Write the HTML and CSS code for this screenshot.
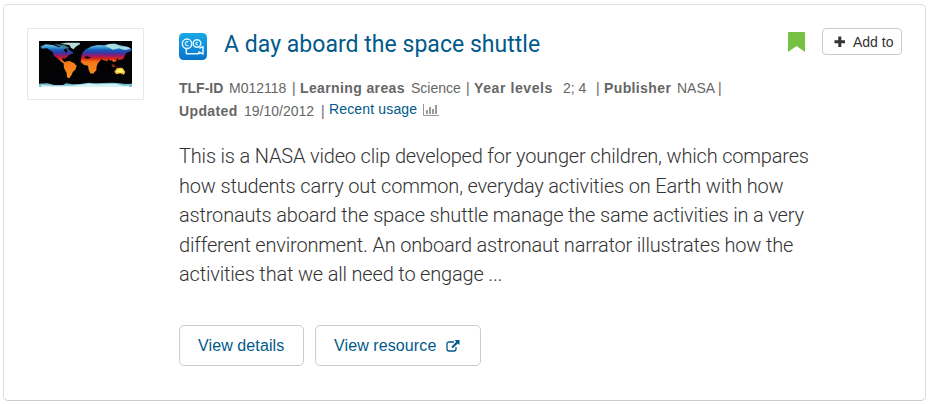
FILE: index.html
```html
<!DOCTYPE html>
<html lang="en">
<head>
<meta charset="utf-8">
<title>A day aboard the space shuttle</title>
<link rel="stylesheet" href="styles.css">
</head>
<body>
<article class="card">
  <a class="thumb">
    <svg class="thumb-map" viewBox="0 0 279 138" preserveAspectRatio="none">
      <defs>
        <linearGradient id="heat" x1="0" y1="0" x2="0" y2="138" gradientUnits="userSpaceOnUse">
          <stop offset="0.04" stop-color="#8acbdc"/>
          <stop offset="0.12" stop-color="#4fa9d8"/>
          <stop offset="0.19" stop-color="#1462bc"/>
          <stop offset="0.26" stop-color="#3a36a4"/>
          <stop offset="0.32" stop-color="#981b68"/>
          <stop offset="0.38" stop-color="#d82418"/>
          <stop offset="0.45" stop-color="#f77718"/>
          <stop offset="0.7" stop-color="#f98a20"/>
        </linearGradient>
        <filter id="soft" x="-5%" y="-5%" width="110%" height="110%"><feGaussianBlur stdDeviation="2"/></filter>
      </defs>
      <rect width="279" height="138" fill="#030305"/>
      <g filter="url(#soft)">
        <path fill="url(#heat)" d="M4 17 20 10 42 12 60 19 74 17 91 27 105 36 91 41 84 48 77 53 71 50 70 57 76 63 82 68 77 70 64 60 54 51 45 44 41 33 24 22 9 23Z"/>
        <path fill="#b8dcda" d="M64 8 82 5 121 5 124 9 112 16 103 25 96 20 91 12Z"/>
        <path fill="#397f91" d="M45 9 76 12 90 20 85 24 60 16Z"/>
        <path fill="url(#heat)" d="M78 62 92 60 106 67 113 75 109 86 102 92 97 103 91 112 84 109 83 96 75 81 74 71Z"/>
        <path fill="url(#heat)" d="M127 48 130 36 137 28 148 21 158 16 176 12 196 13 209 9 227 8 244 13 268 18 278 24 275 31 262 35 256 47 252 55 240 56 231 61 223 63 216 56 209 68 202 59 190 57 182 61 177 66 173 76 172 88 162 98 154 97 149 86 147 74 134 71 125 62Z"/>
        <path fill="#a8dce0" d="M199 15 211 9 228 8 243 16 267 18 274 24 257 27 239 22 222 26 211 21Z"/>
        <path fill="#030305" d="M134 48 146 46 157 50 144 53ZM180 65 187 53 193 59 198 91 183 94ZM203 64 208 54 214 60 220 91 205 94ZM231 58 235 51 241 62Z"/>
        <path fill="#f4b52b" d="M226 92 233 82 243 80 251 81 259 93 255 101 244 97 232 100Z"/>
        <path fill="#fff46d" d="M230 93 240 83 249 84 255 94 246 95Z"/>
        <path fill="#8e3216" d="M217 71 225 70 229 77 245 77 235 79 220 77Z"/>
        <path fill="#79bfd0" d="M0 128 25 127 46 132 72 132 82 127 100 130 124 129 148 125 168 127 192 126 220 125 243 127 258 129 279 128V138H0Z"/>
        <path fill="#d5f2f5" d="M7 132 40 134 98 134 148 128 178 130 230 128 252 134 270 134V138H7Z"/>
        <path fill="#030305" d="M73 26 82 22 86 31 81 35Z"/>
      </g>
    </svg>
  </a>
  <div class="content">
    <header class="heading">
      <svg class="type-icon" viewBox="0 0 28 27">
        <defs><linearGradient id="tile" x1="0" y1="0" x2="0" y2="1"><stop offset="0" stop-color="#18a9e6"/><stop offset="1" stop-color="#0873cb"/></linearGradient></defs>
        <rect width="28" height="27" rx="4.5" fill="url(#tile)"/>
        <g fill="none" stroke="#e0f5ff" stroke-width="1.5" stroke-linejoin="round">
          <circle cx="8" cy="10.8" r="4.7"/>
          <circle cx="18" cy="10.5" r="3.8"/>
          <path d="M7.3 15.5V20.8H19.8V19L24 21V13.6L20.3 15.2"/>
          <path d="M9.3 9A2 2 0 1 0 9.6 12.2M18.7 9.5A1.2 1.2 0 1 0 18.9 11.5" stroke-width="1.1"/>
        </g>
      </svg>
      <h2 class="title">A day aboard the space shuttle</h2>
    </header>
    <div class="meta">
      <div class="meta-row">
        <b class="w-id">TLF-ID</b><span class="w-code">M012118</span><i>|</i>
        <b class="w-areas">Learning areas</b><span class="w-science">Science</span><i>|</i>
        <b class="w-years">Year levels</b><span class="w-levels">2; 4</span><i>|</i>
        <b class="w-publisher">Publisher</b><span class="w-nasa">NASA</span><i>|</i>
      </div>
      <div class="meta-row">
        <b class="w-updated">Updated</b><span class="w-date">19/10/2012</span><i>|</i>
        <a class="usage">Recent usage</a>
        <svg class="chart" viewBox="0 0 16 12"><path d="M.5 0V11.5H16" fill="none" stroke="#999"/><path d="M3 6h2v4H3zM6 3h2v7H6zM9 5h2v5H9zM12 1h2v9h-2z" fill="#999"/></svg>
      </div>
    </div>
    <p class="summary">This is a NASA video clip developed for younger children, which compares<br>how students carry out common, everyday activities on Earth with how<br>astronauts aboard the space shuttle manage the same activities in a very<br>different environment. An onboard astronaut narrator illustrates how the<br>activities that we all need to engage ...</p>
    <div class="actions">
      <a class="button details">View details</a>
      <a class="button resource">View resource
        <svg class="external" viewBox="0 0 14 12"><path d="M8 2H3Q1 2 1 4V9Q1 11 3 11H8Q10 11 10 9V7" fill="none" stroke="currentColor" stroke-width="1.3"/><path d="M8.5 0H13.5V5L11.8 3.4 6.7 8.3 5.3 6.9 10.2 1.8Z" fill="currentColor"/></svg>
      </a>
    </div>
  </div>
  <div class="tools">
    <svg class="bookmark" viewBox="0 0 17 20"><path d="M1 0H16Q17 0 17 1V20L8.5 14 0 20V1Q0 0 1 0Z" fill="#76c043"/></svg>
    <a class="add"><svg class="plus" viewBox="0 0 12 12"><path d="M4.3.5h3v3.7H11v3H7.3V11h-3V7.2H.5v-3h3.8z" fill="#333"/></svg><span>Add to</span></a>
  </div>
</article>
</body>
</html>
```
FILE: styles.css
```css
* { box-sizing: border-box; }
body {
  margin: 0;
  padding: 4px 4px 0 3px;
  background: #fff;
  font-family: "Liberation Sans", Arial, sans-serif;
}
.card {
  display: flex;
  align-items: flex-start;
  height: 397px;
  padding: 23px 23px 0;
  border: 1px solid #ddd;
  border-bottom-color: #ccc;
  border-radius: 5px;
}
.thumb {
  flex: none;
  width: 117px;
  height: 72px;
  margin-right: 35px;
  padding: 12px 11px;
  border: 1px solid #e8e8e8;
}
.thumb-map { display: block; width: 93px; height: 46px; }
.content { flex: 1; min-width: 0; white-space: nowrap; }
.heading { display: flex; align-items: flex-start; height: 49px; }
.type-icon { width: 28px; height: 27px; margin: 5px 17px 0 0; }
.title {
  margin: 1px 0 0;
  color: #005a8b;
  font: 400 23px/32px Roboto, sans-serif;
  letter-spacing: .03px;
}
.meta { height: 66px; color: #666; font-size: 14px; line-height: 23px; }
.meta-row { display: flex; height: 23px; }
.meta-row > * { flex: none; }
.meta-row b { margin-right: 6px; letter-spacing: .38px; }
.meta-row i { width: 8px; font-style: normal; }
.meta-row .w-id { width: 44px; letter-spacing: 0; }
.w-code { width: 63px; }
.w-areas { width: 105px; }
.w-science { width: 55px; }
.meta-row .w-years { width: 81px; letter-spacing: .6px; }
.w-levels { width: 35px; padding-left: 2px; }
.w-publisher { width: 67px; }
.w-nasa { width: 41px; }
.w-updated { width: 59px; }
.w-date { width: 77px; }
.usage { width: 88px; color: #005a8b; line-height: 19px; letter-spacing: .15px; }
.chart { width: 16px; height: 12px; margin: 4px 0 0 6px; }
.summary {
  height: 182px;
  margin: 0;
  color: #333;
  font: 300 20px/29.5px Roboto, sans-serif;
  letter-spacing: -.18px;
  transform: translateY(-1px);
}
.actions { display: flex; gap: 11px; }
.button {
  display: flex;
  align-items: center;
  height: 41px;
  padding: 0 18px;
  border: 1px solid #ccc;
  border-radius: 5px;
  color: #005a8b;
  font-size: 16px;
  letter-spacing: .1px;
}
.details { width: 125px; }
.resource { width: 166px; }
.external { width: 14px; height: 12px; margin-left: 10px; }
.tools { display: flex; align-items: flex-start; flex: none; }
.bookmark { width: 17px; height: 20px; margin: 4px 17px 0 0; }
.add {
  display: flex;
  align-items: center;
  width: 80px;
  height: 27px;
  padding-left: 11px;
  border: 1px solid #ccc;
  border-radius: 4px;
  color: #333;
  font-size: 14px;
}
.plus { width: 12px; height: 12px; margin-right: 7px; }
```
